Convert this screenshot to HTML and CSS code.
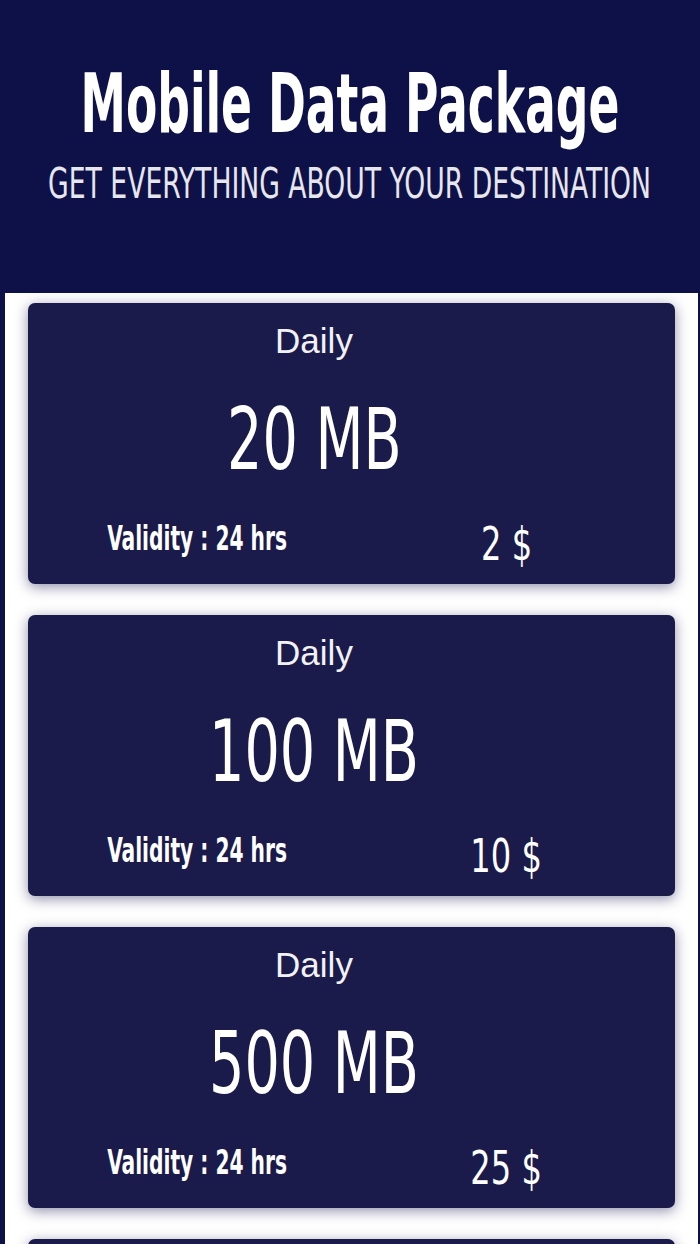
FILE: index.html
```html
<!DOCTYPE html>
<html lang="en">
<head>
<meta charset="utf-8">
<title>Mobile Data Package</title>
<link rel="stylesheet" href="styles.css">
</head>
<body>
  <header class="hero">
    <h1 class="hero-title"><span class="squeeze squeeze-title">Mobile Data Package</span></h1>
    <p class="hero-sub"><span class="squeeze squeeze-sub">GET EVERYTHING ABOUT YOUR DESTINATION</span></p>
  </header>
  <main class="plans">
    <section class="card">
      <div class="card-top">
        <div class="plan-type">Daily</div>
        <div class="plan-size"><span class="squeeze squeeze-size">20 MB</span></div>
      </div>
      <div class="plan-foot">
        <div class="plan-validity"><span class="squeeze squeeze-valid">Validity : 24 hrs</span></div>
        <div class="plan-price"><span class="squeeze squeeze-price">2 $</span></div>
      </div>
    </section>
    <section class="card">
      <div class="card-top">
        <div class="plan-type">Daily</div>
        <div class="plan-size"><span class="squeeze squeeze-size">100 MB</span></div>
      </div>
      <div class="plan-foot">
        <div class="plan-validity"><span class="squeeze squeeze-valid">Validity : 24 hrs</span></div>
        <div class="plan-price"><span class="squeeze squeeze-price">10 $</span></div>
      </div>
    </section>
    <section class="card">
      <div class="card-top">
        <div class="plan-type">Daily</div>
        <div class="plan-size"><span class="squeeze squeeze-size">500 MB</span></div>
      </div>
      <div class="plan-foot">
        <div class="plan-validity"><span class="squeeze squeeze-valid">Validity : 24 hrs</span></div>
        <div class="plan-price"><span class="squeeze squeeze-price">25 $</span></div>
      </div>
    </section>
    <section class="card card-peek"></section>
  </main>
</body>
</html>
```
FILE: styles.css
```css
html, body {
  margin: 0;
  padding: 0;
}

body {
  background: #0e1148;
  font-family: "DejaVu Sans Condensed", "DejaVu Sans", sans-serif;
  color: #ffffff;
  overflow: hidden;
  height: 1244px;
}

.squeeze {
  display: inline-block;
  flex-shrink: 0;
  white-space: nowrap;
  transform-origin: center center;
}

.hero {
  height: 293px;
  box-sizing: border-box;
  padding-top: 62px;
  overflow: hidden;
}

.hero-title {
  margin: 0;
  display: flex;
  justify-content: center;
  font-size: 82px;
  line-height: 84px;
  font-weight: 700;
  color: #ffffff;
}

.squeeze-title {
  transform: scaleX(0.618);
}

.hero-sub {
  margin: 15px 0 0;
  display: flex;
  justify-content: center;
  font-size: 43px;
  line-height: 44px;
  font-weight: 400;
  color: #e6e6ec;
}

.squeeze-sub {
  transform: scaleX(0.689);
}

.plans {
  background: #ffffff;
  margin: 0 2px 0 5px;
  padding: 10px 23px 0;
  height: 951px;
  box-sizing: border-box;
  overflow: hidden;
  display: flex;
  flex-direction: column;
  gap: 31px;
}

.card {
  flex-shrink: 0;
  height: 281px;
  box-sizing: border-box;
  padding: 20px 14px 0;
  background: #1b1b4b;
  border-radius: 7px;
  box-shadow: 0 3px 13px rgba(34, 32, 88, 0.5);
  overflow: hidden;
}

.card-top {
  margin-right: 75px;
  text-align: center;
}

.plan-type {
  font-family: "Liberation Sans", Roboto, sans-serif;
  font-size: 35px;
  line-height: 35px;
  color: #f2f2f4;
}

.plan-size {
  margin-top: 37px;
  display: flex;
  justify-content: center;
  font-size: 86px;
  line-height: 88px;
  font-weight: 400;
}

.squeeze-size {
  transform: scaleX(0.719);
}

.plan-foot {
  margin-top: 37px;
  display: grid;
  grid-template-columns: 1fr 1fr;
  align-items: start;
}

.plan-validity,
.plan-price {
  display: flex;
  justify-content: center;
}

.plan-validity {
  font-size: 34px;
  line-height: 36px;
  font-weight: 700;
}

.squeeze-valid {
  transform: scaleX(0.661);
}

.plan-price {
  font-size: 47px;
  line-height: 47px;
  font-weight: 400;
}

.squeeze-price {
  transform: scaleX(0.76);
}
```
